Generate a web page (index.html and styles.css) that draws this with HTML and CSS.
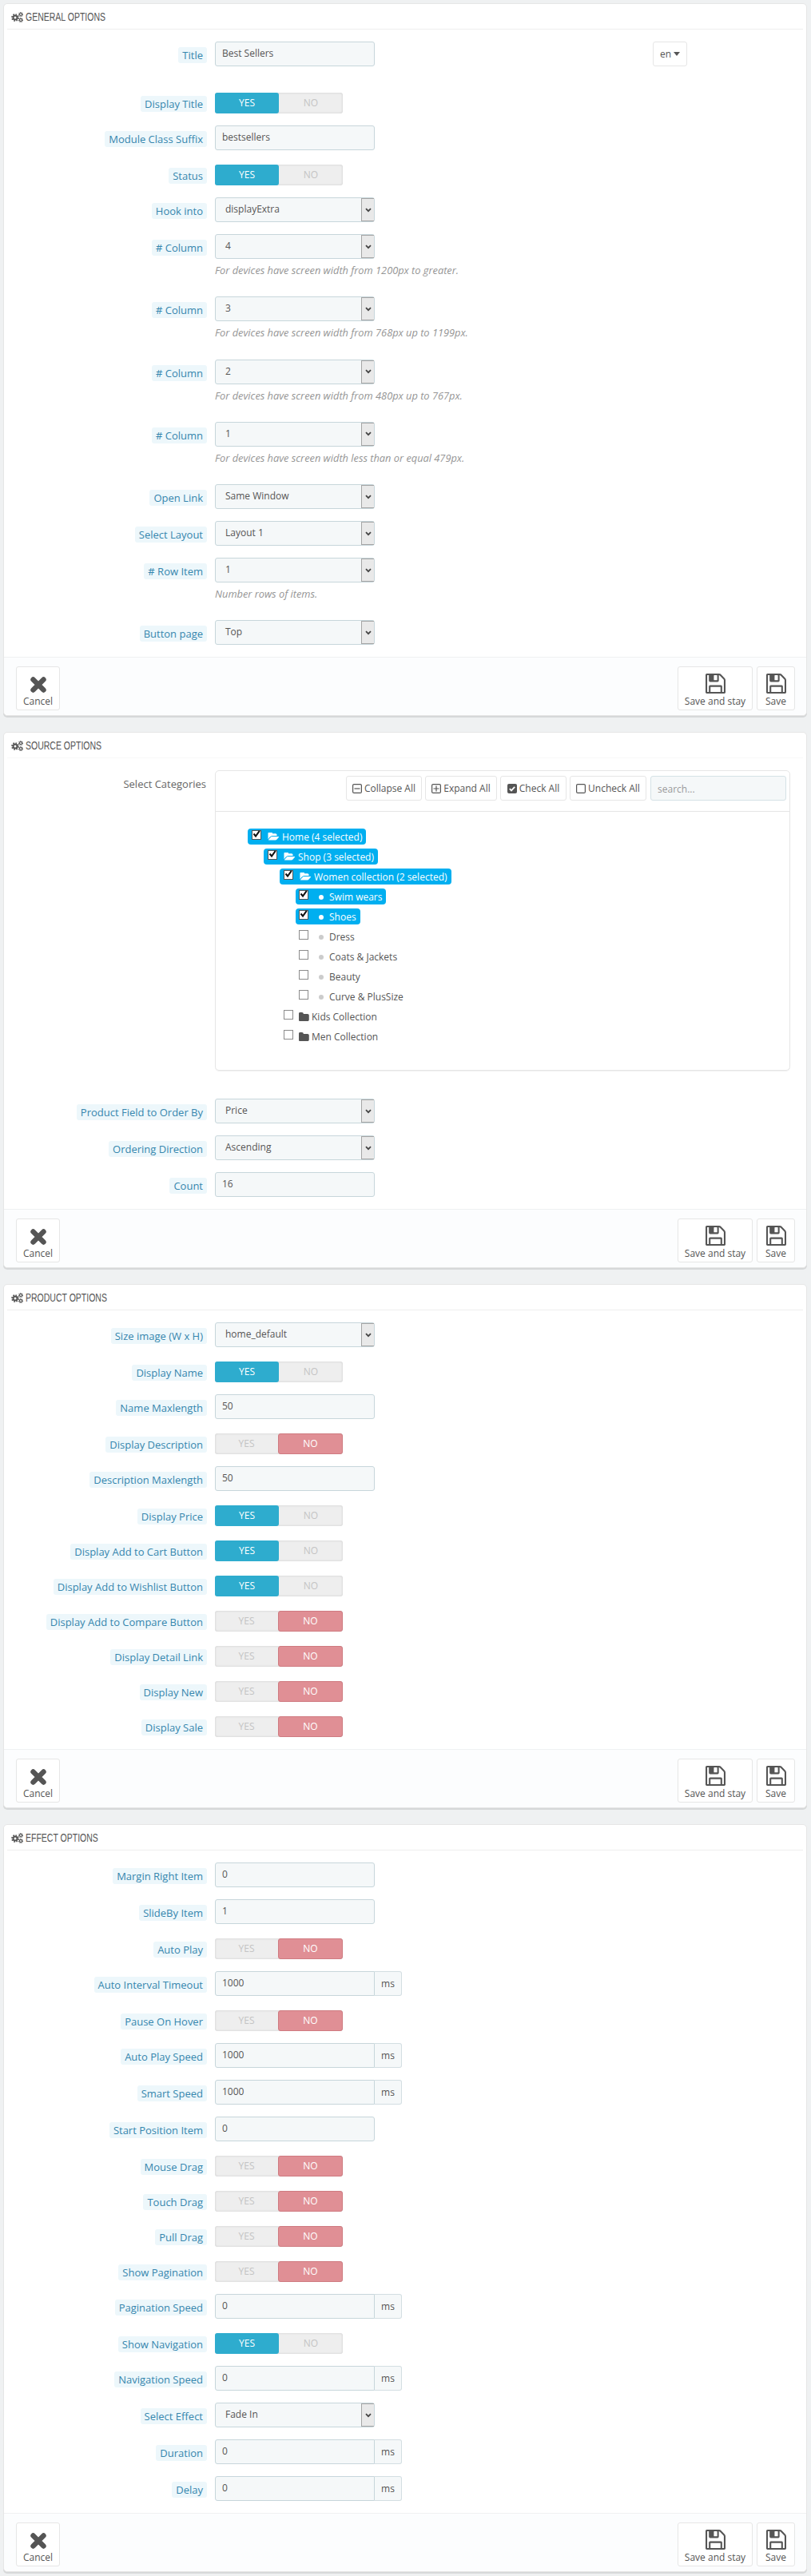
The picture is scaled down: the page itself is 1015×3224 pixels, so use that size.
FILE: index.html
```html
<!DOCTYPE html>
<html lang="en">
<head>
    <meta charset="UTF-8">
    <meta name="viewport" content="width=device-width, initial-scale=1.0">
    <title>Best Sellers module</title>
    <link rel="stylesheet" href="styles.css">
</head>
<body>
    <!-- icon sprite -->
    <svg class="sprite" xmlns="http://www.w3.org/2000/svg">
        <symbol id="i-cogs" viewBox="0 0 30 26">
            <g fill="none" stroke="#555">
                <circle cx="10" cy="14" r="5" stroke-width="4"/>
                <circle cx="10" cy="14" r="8" stroke-width="3.6" stroke-dasharray="3.2 3.08"/>
                <circle cx="24" cy="6" r="3" stroke-width="2.4"/>
                <circle cx="24" cy="6" r="4.8" stroke-width="2.2" stroke-dasharray="2.2 1.57"/>
                <circle cx="24" cy="20" r="3" stroke-width="2.4"/>
                <circle cx="24" cy="20" r="4.8" stroke-width="2.2" stroke-dasharray="2.2 1.57"/>
            </g>
        </symbol>
        <symbol id="i-remove" viewBox="0 0 20 20">
            <path d="M3.5 3.5 16.5 16.5M16.5 3.5 3.5 16.5" fill="none" stroke="#555" stroke-width="6.4" stroke-linecap="round"/>
        </symbol>
        <symbol id="i-save" viewBox="0 0 1536 1536">
            <path fill="#555" d="M384 1408h768v-384h-768v384zm896 0h128v-896q0-14-10-38.5t-20-34.5l-281-281q-10-10-34-20t-39-10v416q0 40-28 68t-68 28h-576q-40 0-68-28t-28-68v-416h-128v1280h128v-416q0-40 28-68t68-28h832q40 0 68 28t28 68v416zm-384-928v-320q0-13-9.5-22.5t-22.5-9.5h-192q-13 0-22.5 9.5t-9.5 22.5v320q0 13 9.5 22.5t22.5 9.5h192q13 0 22.5-9.5t9.5-22.5zm640 32v928q0 40-28 68t-68 28h-1344q-40 0-68-28t-28-68v-1344q0-40 28-68t68-28h928q40 0 88 20t76 48l280 280q28 28 48 76t20 88z"/>
        </symbol>
        <symbol id="i-open" viewBox="0 256 1943 1280">
            <path fill="currentColor" d="M1943 952q0 31-31 66l-336 396q-43 51-120.500 86.500t-143.500 35.500h-1088q-34 0-60.500-13t-26.500-43q0-31 31-66l336-396q43-51 120.500-86.500t143.500-35.500h1088q34 0 60.500 13t26.500 43zm-343-344v160h-832q-94 0-197 47.500t-164 119.500l-337 396-5 6q0-4-.5-12.500t-.5-12.500v-960q0-92 66-158t158-66h320q92 0 158 66t66 158v32h544q92 0 158 66t66 158z"/>
        </symbol>
        <symbol id="i-folder" viewBox="0 144 1600 1408">
            <path fill="#555" d="M1600 624v704q0 92-66 158t-158 66h-1216q-92 0-158-66t-66-158v-960q0-92 66-158t158-66h320q92 0 158 66t66 158v32h672q92 0 158 66t66 158z"/>
        </symbol>
        <symbol id="i-minus" viewBox="0 0 12 12">
            <rect x=".6" y=".6" width="10.800" height="10.800" rx="1.500" fill="none" stroke="#555" stroke-width="1.200"/>
            <path d="M2.500 6h7" stroke="#555" stroke-width="1.200"/>
        </symbol>
        <symbol id="i-plus" viewBox="0 0 12 12">
            <rect x=".6" y=".6" width="10.800" height="10.800" rx="1.500" fill="none" stroke="#555" stroke-width="1.200"/>
            <path d="M2.500 6h7M6 2.500v7" stroke="#555" stroke-width="1.200"/>
        </symbol>
        <symbol id="i-checked" viewBox="0 0 12 12">
            <rect width="12" height="12" rx="2" fill="#555"/>
            <path d="M2.800 6.200 5 8.400 9.200 3.800" fill="none" stroke="#fff" stroke-width="1.800"/>
        </symbol>
        <symbol id="i-empty" viewBox="0 0 12 12">
            <rect x=".6" y=".6" width="10.800" height="10.800" rx="1.500" fill="none" stroke="#555" stroke-width="1.200"/>
        </symbol>
        <symbol id="i-chevron" viewBox="0 0 8 6">
            <path d="M1 1.200 4 4.200 7 1.200" fill="none" stroke="#444" stroke-width="1.800"/>
        </symbol>
        <symbol id="i-tick" viewBox="0 0 12 12">
            <path d="M2.500 5.500 5 8.500 9.800 1.800" fill="none" stroke="#111" stroke-width="2"/>
        </symbol>
    </svg>

    <section class="panel">
        <h3 class="panel-heading"><svg class="icon-cogs"><use href="#i-cogs"/></svg><span class="heading-text">GENERAL OPTIONS</span></h3>
        <div class="panel-body">
            <div class="form-row title-row">
                <div class="form-label"><span class="label-pill">Title</span></div>
                <div class="input-text">Best Sellers</div>
                <div class="lang-button">en<span class="caret"></span></div>
            </div>
            <div class="form-row">
                <div class="form-label"><span class="label-pill">Display Title</span></div>
                <div class="switch"><span class="yes on">YES</span><span class="no">NO</span></div>
            </div>
            <div class="form-row">
                <div class="form-label"><span class="label-pill">Module Class Suffix</span></div>
                <div class="input-text">bestsellers</div>
            </div>
            <div class="form-row">
                <div class="form-label"><span class="label-pill">Status</span></div>
                <div class="switch"><span class="yes on">YES</span><span class="no">NO</span></div>
            </div>
            <div class="form-row">
                <div class="form-label"><span class="label-pill">Hook into</span></div>
                <div class="input-select">displayExtra<span class="select-arrow"><svg><use href="#i-chevron"/></svg></span></div>
            </div>
            <div class="form-row">
                <div class="form-label"><span class="label-pill"># Column</span></div>
                <div class="field-stack">
                    <div class="input-select">4<span class="select-arrow"><svg><use href="#i-chevron"/></svg></span></div>
                    <p class="help-block">For devices have screen width from 1200px to greater.</p>
                </div>
            </div>
            <div class="form-row">
                <div class="form-label"><span class="label-pill"># Column</span></div>
                <div class="field-stack">
                    <div class="input-select">3<span class="select-arrow"><svg><use href="#i-chevron"/></svg></span></div>
                    <p class="help-block">For devices have screen width from 768px up to 1199px.</p>
                </div>
            </div>
            <div class="form-row">
                <div class="form-label"><span class="label-pill"># Column</span></div>
                <div class="field-stack">
                    <div class="input-select">2<span class="select-arrow"><svg><use href="#i-chevron"/></svg></span></div>
                    <p class="help-block">For devices have screen width from 480px up to 767px.</p>
                </div>
            </div>
            <div class="form-row">
                <div class="form-label"><span class="label-pill"># Column</span></div>
                <div class="field-stack">
                    <div class="input-select">1<span class="select-arrow"><svg><use href="#i-chevron"/></svg></span></div>
                    <p class="help-block">For devices have screen width less than or equal 479px.</p>
                </div>
            </div>
            <div class="form-row">
                <div class="form-label"><span class="label-pill">Open Link</span></div>
                <div class="input-select">Same Window<span class="select-arrow"><svg><use href="#i-chevron"/></svg></span></div>
            </div>
            <div class="form-row">
                <div class="form-label"><span class="label-pill">Select Layout</span></div>
                <div class="input-select">Layout 1<span class="select-arrow"><svg><use href="#i-chevron"/></svg></span></div>
            </div>
            <div class="form-row">
                <div class="form-label"><span class="label-pill"># Row Item</span></div>
                <div class="field-stack">
                    <div class="input-select">1<span class="select-arrow"><svg><use href="#i-chevron"/></svg></span></div>
                    <p class="help-block">Number rows of items.</p>
                </div>
            </div>
            <div class="form-row">
                <div class="form-label"><span class="label-pill">Button page</span></div>
                <div class="input-select">Top<span class="select-arrow"><svg><use href="#i-chevron"/></svg></span></div>
            </div>
        </div>
        <div class="panel-footer">
            <a class="foot-button cancel"><svg class="icon-remove"><use href="#i-remove"/></svg>Cancel</a>
            <a class="foot-button stay"><svg class="icon-save"><use href="#i-save"/></svg>Save and stay</a>
            <a class="foot-button"><svg class="icon-save"><use href="#i-save"/></svg>Save</a>
        </div>
    </section>

    <section class="panel">
        <h3 class="panel-heading faint"><svg class="icon-cogs"><use href="#i-cogs"/></svg><span class="heading-text">SOURCE OPTIONS</span></h3>
        <div class="panel-body">
            <div class="form-row tree-row">
                <div class="form-label"><span class="plain-label">Select Categories</span></div>
                <div class="tree-panel">
                    <div class="tree-toolbar">
                        <a class="tool-button"><svg><use href="#i-minus"/></svg>Collapse All</a>
                        <a class="tool-button"><svg><use href="#i-plus"/></svg>Expand All</a>
                        <a class="tool-button"><svg><use href="#i-checked"/></svg>Check All</a>
                        <a class="tool-button"><svg><use href="#i-empty"/></svg>Uncheck All</a>
                        <div class="tree-search">search...</div>
                    </div>
                    <ul class="tree">
                        <li><span class="node selected"><span class="check checked"><svg><use href="#i-tick"/></svg></span><svg class="icon-open"><use href="#i-open"/></svg>Home (4 selected)</span>
                            <ul>
                                <li><span class="node selected"><span class="check checked"><svg><use href="#i-tick"/></svg></span><svg class="icon-open"><use href="#i-open"/></svg>Shop (3 selected)</span>
                                    <ul>
                                        <li><span class="node selected"><span class="check checked"><svg><use href="#i-tick"/></svg></span><svg class="icon-open"><use href="#i-open"/></svg>Women collection (2 selected)</span>
                                            <ul>
                                                <li><span class="node leaf selected"><span class="check checked"><svg><use href="#i-tick"/></svg></span><span class="dot"></span>Swim wears</span></li>
                                                <li><span class="node leaf selected"><span class="check checked"><svg><use href="#i-tick"/></svg></span><span class="dot"></span>Shoes</span></li>
                                                <li><span class="node leaf"><span class="check"></span><span class="dot"></span>Dress</span></li>
                                                <li><span class="node leaf"><span class="check"></span><span class="dot"></span>Coats &amp; Jackets</span></li>
                                                <li><span class="node leaf"><span class="check"></span><span class="dot"></span>Beauty</span></li>
                                                <li><span class="node leaf"><span class="check"></span><span class="dot"></span>Curve &amp; PlusSize</span></li>
                                            </ul>
                                        </li>
                                        <li><span class="node"><span class="check"></span><svg class="icon-folder"><use href="#i-folder"/></svg>Kids Collection</span></li>
                                        <li><span class="node"><span class="check"></span><svg class="icon-folder"><use href="#i-folder"/></svg>Men Collection</span></li>
                                    </ul>
                                </li>
                            </ul>
                        </li>
                    </ul>
                </div>
            </div>
            <div class="form-row">
                <div class="form-label"><span class="label-pill">Product Field to Order By</span></div>
                <div class="input-select">Price<span class="select-arrow"><svg><use href="#i-chevron"/></svg></span></div>
            </div>
            <div class="form-row">
                <div class="form-label"><span class="label-pill">Ordering Direction</span></div>
                <div class="input-select">Ascending<span class="select-arrow"><svg><use href="#i-chevron"/></svg></span></div>
            </div>
            <div class="form-row">
                <div class="form-label"><span class="label-pill">Count</span></div>
                <div class="input-text">16</div>
            </div>
        </div>
        <div class="panel-footer">
            <a class="foot-button cancel"><svg class="icon-remove"><use href="#i-remove"/></svg>Cancel</a>
            <a class="foot-button stay"><svg class="icon-save"><use href="#i-save"/></svg>Save and stay</a>
            <a class="foot-button"><svg class="icon-save"><use href="#i-save"/></svg>Save</a>
        </div>
    </section>

    <section class="panel">
        <h3 class="panel-heading"><svg class="icon-cogs"><use href="#i-cogs"/></svg><span class="heading-text">PRODUCT OPTIONS</span></h3>
        <div class="panel-body">
            <div class="form-row">
                <div class="form-label"><span class="label-pill">Size image (W x H)</span></div>
                <div class="input-select">home_default<span class="select-arrow"><svg><use href="#i-chevron"/></svg></span></div>
            </div>
            <div class="form-row">
                <div class="form-label"><span class="label-pill">Display Name</span></div>
                <div class="switch"><span class="yes on">YES</span><span class="no">NO</span></div>
            </div>
            <div class="form-row">
                <div class="form-label"><span class="label-pill">Name Maxlength</span></div>
                <div class="input-text">50</div>
            </div>
            <div class="form-row">
                <div class="form-label"><span class="label-pill">Display Description</span></div>
                <div class="switch"><span class="yes">YES</span><span class="no on">NO</span></div>
            </div>
            <div class="form-row">
                <div class="form-label"><span class="label-pill">Description Maxlength</span></div>
                <div class="input-text">50</div>
            </div>
            <div class="form-row">
                <div class="form-label"><span class="label-pill">Display Price</span></div>
                <div class="switch"><span class="yes on">YES</span><span class="no">NO</span></div>
            </div>
            <div class="form-row">
                <div class="form-label"><span class="label-pill">Display Add to Cart Button</span></div>
                <div class="switch"><span class="yes on">YES</span><span class="no">NO</span></div>
            </div>
            <div class="form-row">
                <div class="form-label"><span class="label-pill">Display Add to Wishlist Button</span></div>
                <div class="switch"><span class="yes on">YES</span><span class="no">NO</span></div>
            </div>
            <div class="form-row">
                <div class="form-label"><span class="label-pill">Display Add to Compare Button</span></div>
                <div class="switch"><span class="yes">YES</span><span class="no on">NO</span></div>
            </div>
            <div class="form-row">
                <div class="form-label"><span class="label-pill">Display Detail Link</span></div>
                <div class="switch"><span class="yes">YES</span><span class="no on">NO</span></div>
            </div>
            <div class="form-row">
                <div class="form-label"><span class="label-pill">Display New</span></div>
                <div class="switch"><span class="yes">YES</span><span class="no on">NO</span></div>
            </div>
            <div class="form-row">
                <div class="form-label"><span class="label-pill">Display Sale</span></div>
                <div class="switch"><span class="yes">YES</span><span class="no on">NO</span></div>
            </div>
        </div>
        <div class="panel-footer">
            <a class="foot-button cancel"><svg class="icon-remove"><use href="#i-remove"/></svg>Cancel</a>
            <a class="foot-button stay"><svg class="icon-save"><use href="#i-save"/></svg>Save and stay</a>
            <a class="foot-button"><svg class="icon-save"><use href="#i-save"/></svg>Save</a>
        </div>
    </section>

    <section class="panel">
        <h3 class="panel-heading"><svg class="icon-cogs"><use href="#i-cogs"/></svg><span class="heading-text">EFFECT OPTIONS</span></h3>
        <div class="panel-body">
            <div class="form-row">
                <div class="form-label"><span class="label-pill">Margin Right Item</span></div>
                <div class="input-text">0</div>
            </div>
            <div class="form-row">
                <div class="form-label"><span class="label-pill">SlideBy Item</span></div>
                <div class="input-text">1</div>
            </div>
            <div class="form-row">
                <div class="form-label"><span class="label-pill">Auto Play</span></div>
                <div class="switch"><span class="yes">YES</span><span class="no on">NO</span></div>
            </div>
            <div class="form-row">
                <div class="form-label"><span class="label-pill">Auto Interval Timeout</span></div>
                <div class="input-group"><div class="input-text">1000</div><span class="addon">ms</span></div>
            </div>
            <div class="form-row">
                <div class="form-label"><span class="label-pill">Pause On Hover</span></div>
                <div class="switch"><span class="yes">YES</span><span class="no on">NO</span></div>
            </div>
            <div class="form-row">
                <div class="form-label"><span class="label-pill">Auto Play Speed</span></div>
                <div class="input-group"><div class="input-text">1000</div><span class="addon">ms</span></div>
            </div>
            <div class="form-row">
                <div class="form-label"><span class="label-pill">Smart Speed</span></div>
                <div class="input-group"><div class="input-text">1000</div><span class="addon">ms</span></div>
            </div>
            <div class="form-row">
                <div class="form-label"><span class="label-pill">Start Position Item</span></div>
                <div class="input-text">0</div>
            </div>
            <div class="form-row">
                <div class="form-label"><span class="label-pill">Mouse Drag</span></div>
                <div class="switch"><span class="yes">YES</span><span class="no on">NO</span></div>
            </div>
            <div class="form-row">
                <div class="form-label"><span class="label-pill">Touch Drag</span></div>
                <div class="switch"><span class="yes">YES</span><span class="no on">NO</span></div>
            </div>
            <div class="form-row">
                <div class="form-label"><span class="label-pill">Pull Drag</span></div>
                <div class="switch"><span class="yes">YES</span><span class="no on">NO</span></div>
            </div>
            <div class="form-row">
                <div class="form-label"><span class="label-pill">Show Pagination</span></div>
                <div class="switch"><span class="yes">YES</span><span class="no on">NO</span></div>
            </div>
            <div class="form-row">
                <div class="form-label"><span class="label-pill">Pagination Speed</span></div>
                <div class="input-group"><div class="input-text">0</div><span class="addon">ms</span></div>
            </div>
            <div class="form-row">
                <div class="form-label"><span class="label-pill">Show Navigation</span></div>
                <div class="switch"><span class="yes on">YES</span><span class="no">NO</span></div>
            </div>
            <div class="form-row">
                <div class="form-label"><span class="label-pill">Navigation Speed</span></div>
                <div class="input-group"><div class="input-text">0</div><span class="addon">ms</span></div>
            </div>
            <div class="form-row">
                <div class="form-label"><span class="label-pill">Select Effect</span></div>
                <div class="input-select">Fade In<span class="select-arrow"><svg><use href="#i-chevron"/></svg></span></div>
            </div>
            <div class="form-row">
                <div class="form-label"><span class="label-pill">Duration</span></div>
                <div class="input-group"><div class="input-text">0</div><span class="addon">ms</span></div>
            </div>
            <div class="form-row">
                <div class="form-label"><span class="label-pill">Delay</span></div>
                <div class="input-group"><div class="input-text">0</div><span class="addon">ms</span></div>
            </div>
        </div>
        <div class="panel-footer">
            <a class="foot-button cancel"><svg class="icon-remove"><use href="#i-remove"/></svg>Cancel</a>
            <a class="foot-button stay"><svg class="icon-save"><use href="#i-save"/></svg>Save and stay</a>
            <a class="foot-button"><svg class="icon-save"><use href="#i-save"/></svg>Save</a>
        </div>
    </section>
</body>
</html>
```
FILE: styles.css
```css
body {
    margin: 0;
    padding: 4px 5px 5px 4px;
    background-color: #eff1f2;
    font-family: "Open Sans", "Liberation Sans", sans-serif;
    font-size: 12px;
    color: #555;
}

.sprite {
    display: none;
}

.panel {
    margin-bottom: 20px;
    border: 1px solid #e6e6e6;
    border-radius: 5px;
    background-color: #fff;
    box-shadow: 0 2px 0 rgba(0, 0, 0, 0.1);
}

.panel:last-child {
    margin-bottom: 0;
}

.panel-heading {
    box-sizing: border-box;
    display: flex;
    align-items: center;
    height: 32px;
    margin: 0 4px;
    padding: 1px 0 0 5px;
    border-bottom: 1px solid #eee;
    font-family: "Liberation Sans", sans-serif;
    font-size: 14px;
    font-weight: normal;
    color: #555;
}

.panel-heading.faint {
    border-bottom-color: #f8f8f8;
}

/* no condensed font installed, so squeeze the regular one */
.heading-text {
    transform: scaleX(0.75);
    transform-origin: left center;
    white-space: nowrap;
}

.icon-cogs {
    width: 15px;
    height: 13px;
    margin-right: 3px;
}

.panel-body {
    padding-top: 15px;
}

.form-row {
    display: flex;
    margin-bottom: 15px;
}

.title-row {
    margin-bottom: 30px;
}

.tree-row {
    margin-bottom: 35px;
}

.form-label {
    flex: none;
    width: 254px;
    margin-right: 10px;
    padding-top: 7px;
    text-align: right;
    font-size: 13px;
    line-height: 20px;
}

.label-pill {
    display: inline-block;
    padding: 0 5px;
    border-radius: 3px;
    background-color: #edf7fb;
    color: #3586ae;
}

.plain-label {
    padding-right: 1px;
    color: #666;
}

.input-text,
.input-select {
    box-sizing: border-box;
    position: relative;
    width: 200px;
    height: 31px;
    border: 1px solid #c7d6db;
    border-radius: 3px;
    background-color: #f5f8f9;
    line-height: 28px;
}

.input-text {
    padding-left: 8px;
}

.input-select {
    padding-left: 12px;
}

.select-arrow {
    box-sizing: border-box;
    position: absolute;
    top: 0;
    right: 0;
    bottom: 0;
    display: flex;
    align-items: center;
    justify-content: center;
    width: 16px;
    border: 1px solid #a5a5a5;
    border-width: 1px 0 1px 1px;
    background-color: #e9e9e9;
}

.select-arrow svg {
    width: 8px;
    height: 6px;
}

.field-stack {
    width: 300px;
    margin-bottom: 9.25px;
}

.help-block {
    margin: 0;
    padding-top: 5px;
    font-size: 12.8px;
    font-style: italic;
    line-height: 18px;
    color: #959595;
    white-space: nowrap;
}

.lang-button {
    box-sizing: border-box;
    display: flex;
    align-items: center;
    justify-content: center;
    width: 43px;
    height: 31px;
    margin-left: 348px;
    border: 1px solid #e6e6e6;
    border-radius: 3px;
    background-color: #fff;
}

.caret {
    width: 0;
    height: 0;
    margin-left: 3px;
    border-top: 5px solid #555;
    border-left: 4px solid transparent;
    border-right: 4px solid transparent;
}

.switch {
    display: flex;
    width: 160px;
    height: 26px;
    margin-top: 3px;
    border-radius: 3px;
    background-color: #eee;
    box-shadow: inset 0 0 3px rgba(0, 0, 0, 0.15);
    line-height: 26px;
    text-align: center;
    color: #c4c4c4;
}

.switch span {
    box-sizing: border-box;
    flex: 1;
    border-radius: 3px;
}

.switch .yes.on {
    background-color: #2eacce;
    color: #fff;
}

.switch .no.on {
    border: 1px solid #cf7a80;
    background-color: #e08f95;
    line-height: 24px;
    color: #fff;
}

.input-group {
    display: flex;
}

.input-group .input-text {
    border-radius: 3px 0 0 3px;
}

.addon {
    box-sizing: border-box;
    width: 34px;
    height: 31px;
    border: 1px solid #d3dee2;
    border-left: 0;
    border-radius: 0 3px 3px 0;
    background-color: #f5f8f9;
    text-align: center;
    line-height: 30px;
}

.panel-footer {
    display: flex;
    justify-content: flex-end;
    gap: 5px;
    height: 55px;
    padding: 11px 14px 6px 15px;
    border-top: 1px solid #eff1f2;
    border-radius: 0 0 5px 5px;
    background-color: #fcfdfe;
}

.foot-button {
    box-sizing: border-box;
    display: flex;
    flex-direction: column;
    align-items: center;
    width: 48px;
    height: 55px;
    padding-top: 8px;
    border: 1px solid #e6e6e6;
    border-radius: 3px;
    background-color: #fff;
    line-height: 18px;
}

.foot-button.cancel {
    width: 55px;
    margin-right: auto;
    padding-top: 12px;
}

.foot-button.stay {
    width: 94px;
}

.icon-save {
    width: 25px;
    height: 25px;
    margin-bottom: 1px;
}

.icon-remove {
    width: 20px;
    height: 20px;
    margin-bottom: 2px;
}

.tree-panel {
    box-sizing: border-box;
    width: 720px;
    height: 376px;
    border: 1px solid #e6e6e6;
    border-radius: 5px;
    box-shadow: 0 1px 0 rgba(0, 0, 0, 0.06);
}

.tree-toolbar {
    box-sizing: border-box;
    display: flex;
    justify-content: flex-end;
    gap: 4px;
    height: 51px;
    padding: 6px 4px 0 0;
    border-bottom: 1px solid #e6e6e6;
}

.tool-button {
    box-sizing: border-box;
    display: flex;
    align-items: center;
    justify-content: center;
    height: 31px;
    border: 1px solid #e6e6e6;
    border-radius: 3px;
    background-color: #fff;
}

.tool-button:nth-child(1) {
    width: 95px;
}

.tool-button:nth-child(2) {
    width: 90px;
}

.tool-button:nth-child(3) {
    width: 83px;
}

.tool-button:nth-child(4) {
    width: 96px;
}

.tool-button svg {
    width: 12px;
    height: 12px;
    margin-right: 3px;
}

.tree-search {
    box-sizing: border-box;
    width: 170px;
    height: 31px;
    margin-left: 1px;
    padding-left: 8px;
    border: 1px solid #d5e2e6;
    border-radius: 3px;
    background-color: #f5f8f9;
    line-height: 31px;
    color: #999;
}

.tree,
.tree ul {
    margin: 0;
    padding: 0;
    list-style: none;
}

.tree {
    padding: 21px 0 0 40px;
}

.tree ul {
    padding-left: 20px;
}

.tree li {
    margin-top: 5px;
}

.tree > li {
    margin-top: 0;
}

.node {
    box-sizing: border-box;
    display: inline-flex;
    align-items: center;
    height: 20px;
    padding: 0 5px;
    border-radius: 4px;
    color: #555;
}

.node.selected {
    background-color: #00aff0;
    color: #fff;
}

.check {
    box-sizing: border-box;
    flex: none;
    width: 12px;
    height: 12px;
    margin: -4px 8px 0 0;
    border: 1px solid #8c8c8c;
    background-color: #fff;
}

.check svg {
    display: block;
    width: 12px;
    height: 12px;
    margin: -2px 0 0 -1px;
}

.check.checked {
    border-color: #555;
}

.icon-open {
    width: 14px;
    height: 10px;
    margin-right: 4px;
    color: #fff;
}

.icon-folder {
    width: 13px;
    height: 11px;
    margin: 0 3px 0 -1px;
}

.leaf .check {
    margin-left: -1px;
    margin-right: 13px;
}

.dot {
    flex: none;
    width: 6px;
    height: 6px;
    margin: 2px 7px 0 0;
    border-radius: 50%;
    background-color: #ccc;
}

.selected .dot {
    background-color: #fff;
}
```
